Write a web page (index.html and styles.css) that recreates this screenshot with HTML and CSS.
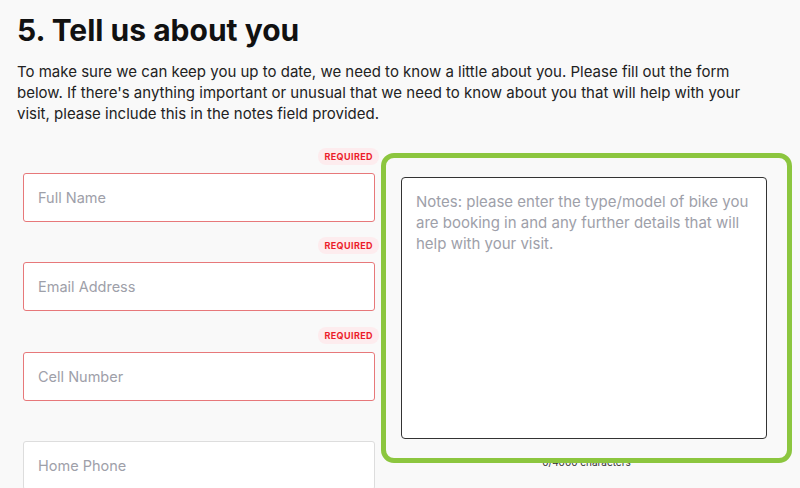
FILE: index.html
```html
<!DOCTYPE html>
<html lang="en">
<head>
  <meta charset="UTF-8">
  <meta name="viewport" content="width=device-width, initial-scale=1.0">
  <title>Tell us about you</title>
  <link rel="stylesheet" href="styles.css">
</head>
<body>
  <h1>5. Tell us about you</h1>
  <p class="intro">To make sure we can keep you up to date, we need to know a little about you. Please fill out the form below. If there's anything important or unusual that we need to know about you that will help with your visit, please include this in the notes field provided.</p>

  <form class="details-form">
    <div class="fields">
      <div class="field">
        <div class="field-meta"><span class="required">Required</span></div>
        <input type="text" class="input invalid" placeholder="Full Name">
      </div>
      <div class="field">
        <div class="field-meta"><span class="required">Required</span></div>
        <input type="email" class="input invalid" placeholder="Email Address">
      </div>
      <div class="field">
        <div class="field-meta"><span class="required">Required</span></div>
        <input type="tel" class="input invalid" placeholder="Cell Number">
      </div>
      <div class="field">
        <div class="field-meta"></div>
        <input type="tel" class="input" placeholder="Home Phone">
      </div>
    </div>

    <div class="notes-col">
      <div class="notes-highlight">
        <textarea class="notes" placeholder="Notes: please enter the type/model of bike you are booking in and any further details that will help with your visit."></textarea>
      </div>
      <div class="char-count">0/4000 characters</div>
    </div>
  </form>
</body>
</html>
```

FILE: styles.css
```css
html, body {
  margin: 0;
  background-color: #f9f9f9;
}

body {
  font-family: Inter, 'Open Sans', sans-serif;
  color: #111;
  padding: 0 17px;
  overflow: hidden;
  height: 488px;
}

h1 {
  font-size: 30px;
  font-weight: 700;
  margin: 12px 0 0;
  line-height: 36px;
}

.intro {
  font-size: 15px;
  line-height: 21px;
  margin: 13px 0 0;
  color: #222;
  max-width: 750px;
}

.details-form {
  display: flex;
  width: 775px;
  margin-top: 24px;
}

.fields {
  flex-shrink: 0;
  width: 352px;
  margin-left: 6px;
  display: flex;
  flex-direction: column;
  gap: 15.4px;
}

.field-meta {
  display: flex;
  justify-content: flex-end;
  height: 17px;
  margin-bottom: 8px;
  margin-right: -4px;
}

.required {
  font-size: 9px;
  font-weight: 700;
  text-transform: uppercase;
  letter-spacing: 0.4px;
  color: #ec1c2b;
  background-color: #fdecee;
  border-radius: 8px;
  padding: 0 6px;
  line-height: 17px;
}

.input {
  display: block;
  box-sizing: border-box;
  width: 100%;
  height: 49px;
  border: 1px solid #ddd;
  border-radius: 3px;
  background-color: #fff;
  padding: 0 14px;
  font-family: inherit;
  font-size: 14.5px;
  outline: none;
}

.input.invalid {
  border-color: #e7787a;
}

.input::placeholder,
.notes::placeholder {
  color: #9ea0a9;
}

.notes-col {
  flex-shrink: 0;
  margin-left: 6px;
  width: 411px;
}

.notes-highlight {
  position: relative;
  z-index: 1;
  box-sizing: border-box;
  margin-top: 5px;
  height: 310px;
  border: 5px solid #8cc63f;
  border-radius: 13px;
  padding: 19px 20px 19px 15px;
}

.notes {
  display: block;
  box-sizing: border-box;
  width: 100%;
  height: 100%;
  resize: none;
  border: 1.5px solid #333;
  border-radius: 4px;
  background-color: #fff;
  padding: 13px 14px;
  font-family: inherit;
  font-size: 15px;
  line-height: 21px;
  outline: none;
}

.char-count {
  margin-top: -7px;
  text-align: center;
  font-size: 10px;
  color: #333;
}
```
